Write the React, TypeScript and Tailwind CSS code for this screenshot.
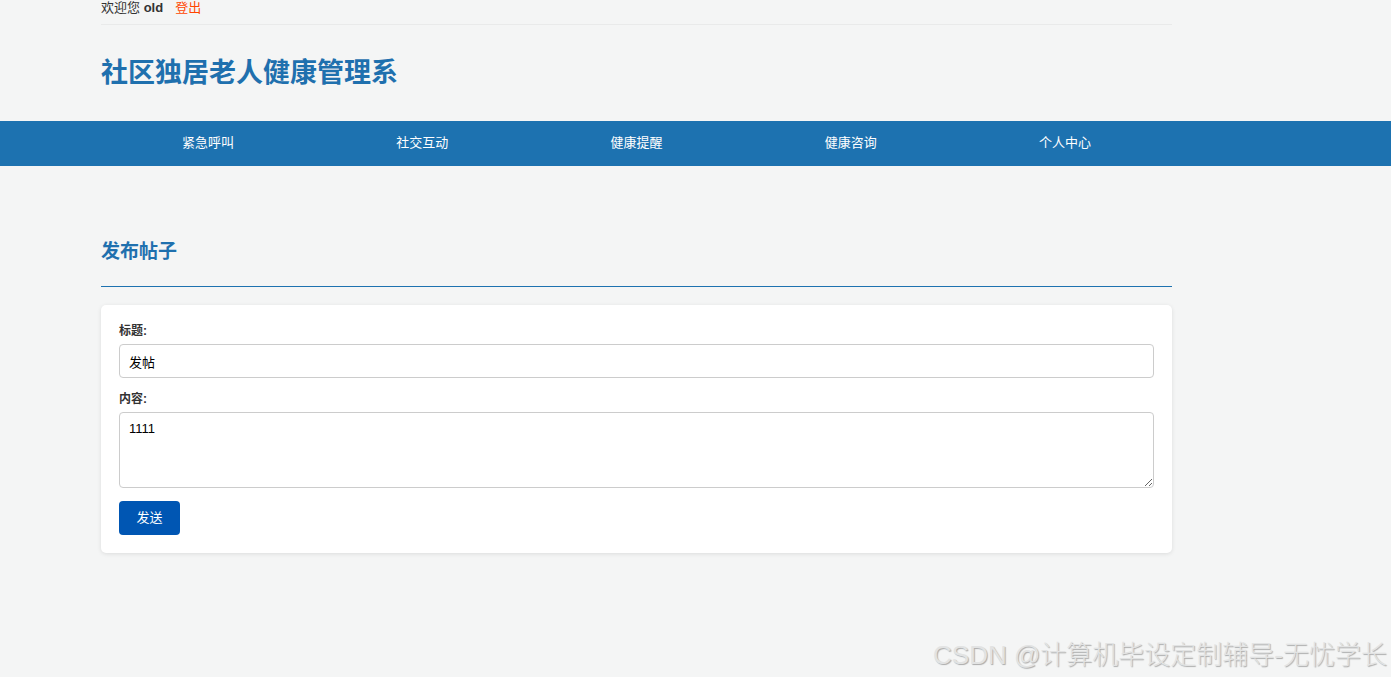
import { useState } from 'react'

const navItems = ['紧急呼叫', '社交互动', '健康提醒', '健康咨询', '个人中心']

function App() {
  const [title, setTitle] = useState('发帖')
  const [content, setContent] = useState('1111')

  return (
    <div
      className="relative min-h-[677px] bg-[#f4f5f5] text-[#333]"
      style={{ fontFamily: '"Liberation Sans", "Noto Sans CJK SC", sans-serif' }}
    >
      <header>
        <div className="ml-[101px] w-[1071px]">
          <div className="flex h-[25px] items-start border-b border-[#e9eaea] text-[13px] leading-[15px]">
            <span>
              欢迎您 <b className="font-bold">old</b>
            </span>
            <a href="#" className="ml-[12px] text-[#ff4500]">
              登出
            </a>
          </div>
          <div className="flex h-[96px] items-center">
            <h1 className="text-[27px] font-bold leading-[36px] text-[#1f70ae]">社区独居老人健康管理系</h1>
          </div>
        </div>
        <nav className="h-[45px] bg-[#1d72b0]">
          <ul className="ml-[101px] flex h-full w-[1071px] items-center pb-[2px]">
            {navItems.map((item) => (
              <li key={item} className="flex-1 text-center text-[13px] text-white">
                <a href="#">{item}</a>
              </li>
            ))}
          </ul>
        </nav>
      </header>

      <main className="ml-[101px] w-[1071px] pt-[73px]">
        <h2 className="border-b border-[#1d72b0] pb-[21px] text-[19px] font-bold leading-[26px] text-[#1f70ae]">
          发布帖子
        </h2>

        <form
          className="mt-[18px] rounded-[5px] bg-white px-[18px] pb-[18px] pt-[17px] shadow-[0_1px_4px_rgba(0,0,0,0.1)]"
          onSubmit={(e) => e.preventDefault()}
        >
          <label className="block text-[12px] font-semibold leading-[18px] text-[#333]">标题:</label>
          <input
            className="mt-[4px] block h-[34px] w-full rounded-[4px] border border-[#ccc] px-[9px] text-[13px] text-black outline-none"
            value={title}
            onChange={(e) => setTitle(e.target.value)}
          />

          <label className="mt-[12px] block text-[12px] font-semibold leading-[18px] text-[#333]">内容:</label>
          <textarea
            className="mt-[4px] block h-[76px] w-full rounded-[4px] border border-[#ccc] px-[9px] py-[7px] text-[13px] leading-[18px] text-black outline-none"
            value={content}
            onChange={(e) => setContent(e.target.value)}
          />

          <button
            type="submit"
            className="mt-[13px] h-[34px] w-[61px] rounded-[4px] bg-[#0056b3] text-[13px] text-white"
          >
            发送
          </button>
        </form>
      </main>

      <div className="absolute bottom-[6px] right-[4px] text-[26px] font-light leading-[32px] text-[#e2e3e3] [text-shadow:1px_1px_1px_rgba(0,0,0,0.3)]">
        CSDN @计算机毕设定制辅导-无忧学长
      </div>
    </div>
  )
}

export default App
